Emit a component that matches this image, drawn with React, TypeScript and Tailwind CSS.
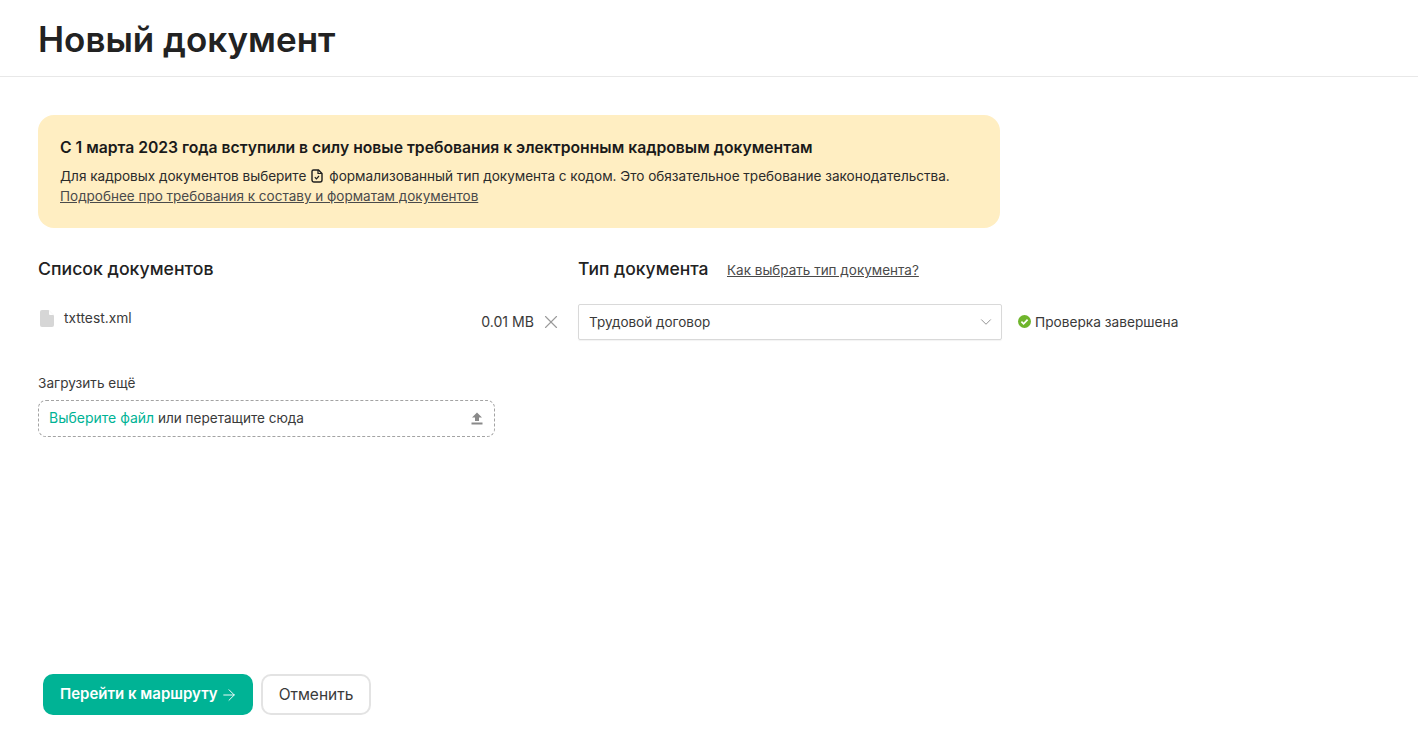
import { ArrowRight, ChevronDown, X } from "lucide-react";
import React from "react";

const FileIcon = () => (
  <svg width="14" height="17" viewBox="0 0 14 17" className="shrink-0 ml-[2px] mr-[-2px]">
    <path d="M2 0h6.5L14 5.5V15a2 2 0 0 1-2 2H2a2 2 0 0 1-2-2V2a2 2 0 0 1 2-2z" fill="#d6d6d6" />
    <path d="M9 0.5L13.5 5H10a1 1 0 0 1-1-1z" fill="#ffffff" />
  </svg>
);

const FormalDocIcon = () => (
  <svg width="12" height="14" viewBox="0 0 12 14" fill="none" className="inline-block ml-[5px] mr-[6px] align-[-2px]">
    <path d="M2.5 1h5L11 4.5V11a2 2 0 0 1-2 2H3a2 2 0 0 1-2-2V2.5A1.5 1.5 0 0 1 2.5 1z" stroke="#1f1f1f" strokeWidth="1.4" />
    <path d="M7 1v3.5h4" stroke="#1f1f1f" strokeWidth="1.2" />
    <path d="M3.8 8.2l1.6 1.6 2.6-2.8" stroke="#1f1f1f" strokeWidth="1.2" />
  </svg>
);

const UploadIcon = () => (
  <svg width="12" height="13" viewBox="0 0 12 13" className="shrink-0">
    <path d="M6 0.5L11 5.5H8V9H4V5.5H1z" fill="#8a8a8a" />
    <rect x="0.5" y="10.5" width="11" height="2" fill="#8a8a8a" />
  </svg>
);

const CheckIcon = () => (
  <svg width="13" height="13" viewBox="0 0 13 13" className="shrink-0">
    <circle cx="6.5" cy="6.5" r="6.5" fill="#6fb52c" />
    <path d="M3.4 6.7l2.2 2.2 4-4.3" fill="none" stroke="#ffffff" strokeWidth="1.7" />
  </svg>
);

const App = () => {
  return (
    <div className="h-[740px] flex flex-col bg-white text-[#2b2b2b] font-['Inter',sans-serif] overflow-hidden">
      <header className="h-[77px] border-b border-[#e8e8e8] pl-[38px] pt-[15px] shrink-0">
        <h1 className="text-[35px] leading-[48px] font-semibold text-[#222222]">Новый документ</h1>
      </header>

      <main className="pl-[38px] pt-[38px] flex-1">
        <div className="w-[962px] h-[113px] rounded-2xl bg-[#ffeec2] pl-[22px] pt-[23px]">
          <p className="text-[15.72px] leading-[20px] font-semibold text-[#1a1a1a]">
            С 1 марта 2023 года вступили в силу новые требования к электронным кадровым документам
          </p>
          <p className="mt-[8px] text-[13.55px] leading-[20px] text-[#2b2b2b]">
            Для кадровых документов выберите
            <FormalDocIcon />
            формализованный тип документа с кодом. Это обязательное требование законодательства.
          </p>
          <a className="block text-[13.5px] leading-[20px] text-[#4a4a4a] underline">
            Подробнее про требования к составу и форматам документов
          </a>
        </div>

        <div className="flex mt-[29px]">
          <section className="w-[540px] shrink-0">
            <h2 className="text-[17.7px] leading-[24px] font-medium text-[#222222]">Список документов</h2>
            <div className="flex justify-between mt-[23px] w-[520px] h-[36px]">
              <div className="flex items-start gap-[12px] pt-[6px]">
                <FileIcon />
                <span className="text-[13.8px] leading-[16px] text-[#3a3a3a]">txttest.xml</span>
              </div>
              <div className="flex items-center gap-[9px] h-[36px]">
                <span className="text-[14.1px] text-[#3a3a3a]">0.01 MB</span>
                <X size={22} strokeWidth={1.25} color="#9a9a9a" className="-ml-[3px] -mr-[4px]" />
              </div>
            </div>
            <p className="mt-[35px] text-[13.6px] leading-[16px] text-[#3a3a3a]">Загрузить ещё</p>
            <div className="mt-[9px] w-[457px] h-[37px] rounded-lg border border-dashed border-[#a3a3a3] flex items-center justify-between pl-[10px] pr-[11px]">
              <span className="pb-[2px] text-[13.55px] text-[#3a3a3a]">
                <span className="text-[14px] text-[#00b395]">Выберите файл</span> или перетащите сюда
              </span>
              <UploadIcon />
            </div>
          </section>

          <section>
            <div className="flex items-center gap-[18.5px] h-[24px]">
              <h2 className="text-[17.5px] leading-[24px] font-medium text-[#222222]">Тип документа</h2>
              <a className="pt-[2px] text-[13.5px] text-[#4a4a4a] underline">Как выбрать тип документа?</a>
            </div>
            <div className="flex items-center mt-[23px]">
              <div className="w-[424px] h-[36px] rounded-[2px] border border-[#d9d9d9] flex items-center justify-between pl-[10px] pr-[6px] shadow-[0_1px_1px_rgba(0,0,0,0.05)]">
                <span className="text-[13.5px] text-[#3a3a3a]">Трудовой договор</span>
                <ChevronDown size={18} strokeWidth={1.25} color="#8c8c8c" />
              </div>
              <div className="flex items-center gap-[4px] ml-[16px]">
                <CheckIcon />
                <span className="text-[13.7px] text-[#3a3a3a]">Проверка завершена</span>
              </div>
            </div>
          </section>
        </div>
      </main>

      <footer className="flex items-center gap-[8px] pl-[43px] pb-[25px] shrink-0">
        <button className="h-[41px] w-[210px] rounded-[10px] bg-[#00b395] text-white text-[15px] font-semibold flex items-center justify-start pl-[17px]">
          Перейти к маршруту
          <ArrowRight size={18} strokeWidth={1.25} className="ml-[2px]" />
        </button>
        <button className="h-[41px] w-[110px] rounded-[10px] border-2 border-[#e3e3e3] bg-white text-[15.5px] text-[#3a3a3a]">
          Отменить
        </button>
      </footer>
    </div>
  );
};

export default App;
